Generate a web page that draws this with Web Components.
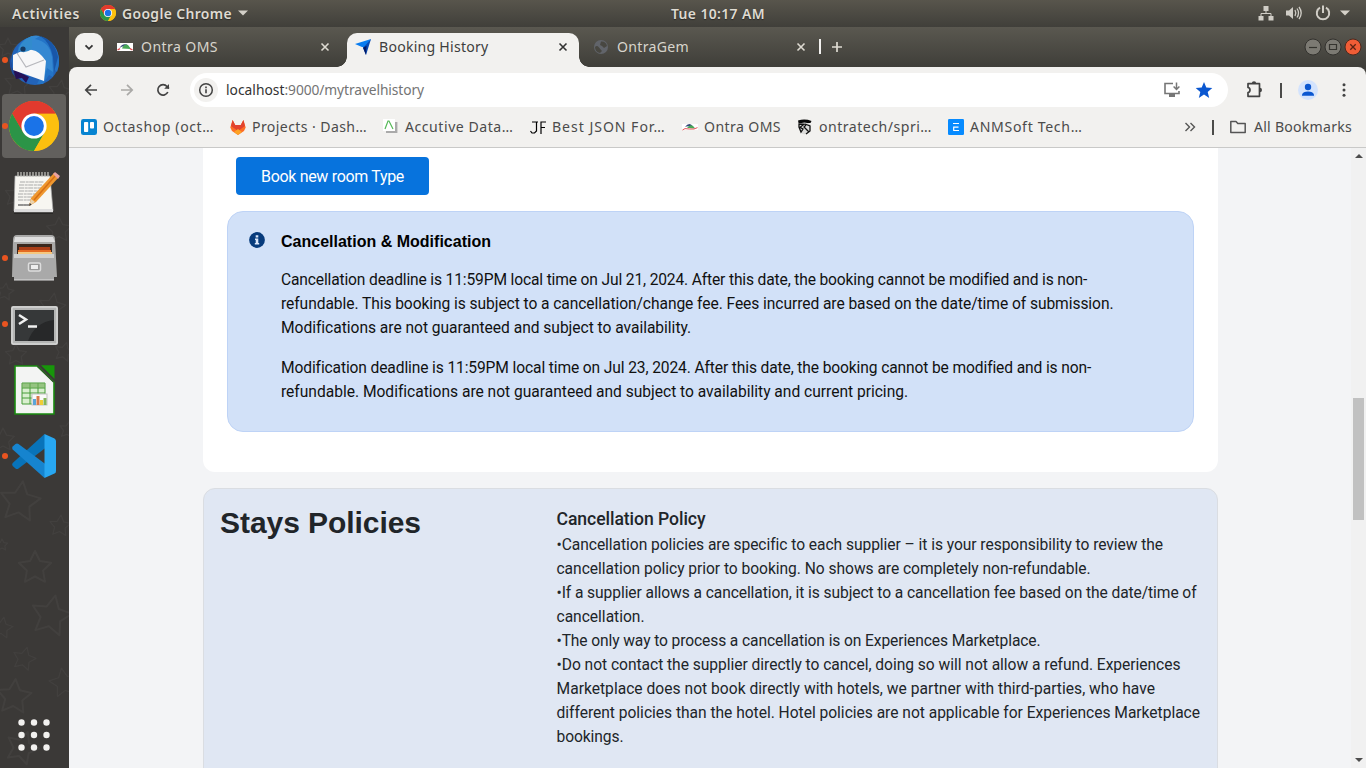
<!DOCTYPE html>
<html lang="en">
<head>
<meta charset="utf-8">
<title>Booking History</title>
<style>
html,body{margin:0;height:100%;overflow:hidden}
body{font-family:"Noto Sans","Open Sans",sans-serif;background:#3b3937}
</style>
</head>
<body>
<desk-top></desk-top>
<script>
const ICONS = {
chrome:['0 0 50 50',`<circle cx="25" cy="25" r="25" fill="#fbbc05"/><path d="M3.3 12.5A25 25 0 0 1 46.7 12.5H25L14.2 31.2Z" fill="#e23a2e"/><path d="M3.3 12.5A25 25 0 0 0 25 50L35.8 31.2 14.2 31.2Z" fill="#2b9447"/><path d="M46.7 12.5A25 25 0 0 1 25 50L35.8 31.2 37.5 25 25 12.5Z" fill="#fcc00f"/><path d="M3.3 12.5 14.2 31.2 25 25 25 12.5 46.7 12.5A25 25 0 0 0 3.3 12.5" fill="#e23a2e"/><circle cx="25" cy="25" r="12.6" fill="#fff"/><circle cx="25" cy="25" r="9.9" fill="#1a73e8"/>`],
caret:['0 0 10 6','<path d="M0 .5H10L5 5.5Z" fill="#d4d0c8"/>'],
network:['0 0 16 16','<path d="M5.5 1h5v5h-5zM.5 11h5v4.500h-5zM10.500 11h5v4.500h-5z" fill="#d0cdc6"/><path d="M8 6v3M3 11V8.500h10V11" fill="none" stroke="#d0cdc6"/>'],
volume:['0 0 16 16','<path d="M0 5.500h3L7 2v12L3 10.500H0z" fill="#d0cdc6"/><path d="M9 5q1.600 3 0 6M11 3.500q3 4.500 0 9M13 2q4.400 6 0 12" fill="none" stroke="#d0cdc6" stroke-width="1.300"/>'],
power:['0 0 16 16','<path d="M5 2.700a6.200 6.200 0 1 0 6 0" fill="none" stroke="#d0cdc6" stroke-width="2"/><path d="M8 .5V8" stroke="#d0cdc6" stroke-width="2"/>'],
thunderbird:['0 0 52 52',`<circle cx="27" cy="27" r="24" fill="#2263b8"/><path d="M10 14C15 1 31-1 40 6 50 12 54 26 49 38L46 35 45 43 41 41 35 50 29 50 34 40Z" fill="#2474c7"/><path d="M13 14C17 3 25 0 32 2L27 5Q42 8 44 23L45 38 39 34 37 41 31 33 35 26 30 20Z" fill="#3488d2"/><path d="M32 2Q47 6 50 23L46 38 45 23Q42 8 32 2" fill="#1856a8"/><path d="M5 35 8 45 14 44 18 49 21 43Z" fill="#251158"/><path d="M5 21 16 16Q27 14 34 22L38 27 36 47 5 36Z" fill="#f7f7f8"/><path d="M9 19 18 33 36 26" fill="none" stroke="#b7b8bd" stroke-width="1.200"/><path d="M9 20Q12 6 24 2L24 15Q17 20 11 17Z" fill="#328bcd"/><circle cx="15" cy="15" r="2.600" fill="#153963"/><path d="M2 20Q0 35 7 43L4 33Z" fill="#1d4ca2"/>`],
notes:['0 -2 52 52',`<path d="M7 8H42L45 43H6Z" fill="#f7f6f1" stroke="#aaa" stroke-width=".7"/><path d="M6 41H45V45H6Z" fill="#ddd"/><path d="M6 45H45" stroke="#242322" stroke-width="1.500"/><path d="M10 4V9M13 4V9M16 4V9M19 4V9M22 4V9M25 4V9M28 4V9M31 4V9M34 4V9M37 4V9M40 4V9" stroke="#c8c8c2" stroke-width="1.200"/><path d="M12 14H36M11 17H34M11 20H37M11 23H31M10 26H35M10 29H30M10 32H28M10 37H23" stroke="#aaa" stroke-width="1.100" stroke-dasharray="5 .7 3 .5"/><path d="M10 37H21" stroke="#555"/><path d="m46 5 5 4L28 34l-7 4 2-8Z" fill="#ef982f"/><path d="m48 7-22 25" stroke="#d66f15" stroke-width="1.500"/><path d="m45 6 2-2 5 4-2 3Z" fill="#e9a2a0"/><path d="m21 38 2-7 4 3Z" fill="#ead3ae"/><path d="m21 38 .7-3 2 1.500Z" fill="#333"/>`],
files:['1 0 52 52',`<path d="M6 8Q6 3 10 3H44Q48 3 48 7L50 45H5Z" fill="#a9a9a8"/><path d="M8 5H46L48 10H7Z" fill="#dedede"/><path d="M10 12H45V24H10Z" fill="#3b281e"/><path d="M12 15H43V18H12Z" fill="#aa3e18"/><path d="M11 18H44V21H11Z" fill="#e46a22"/><path d="M11 20H45V23H11Z" fill="#f5c77e"/><path d="M7 22H47V48H7Z" fill="#a9a9a9"/><path d="M7 22H47V26H7Z" fill="#d0d0cf"/><rect x="21.500" y="31" width="12" height="8" rx="1.500" fill="#999" stroke="#ddd" stroke-width="1.500"/><rect x="24" y="33" width="7" height="4" fill="#eee"/><path d="M7 48H47" stroke="#ddd"/>`],
terminal:['0 -1 52 52',`<rect x="3" y="7" width="47" height="39" rx="2" fill="#b4b5b4"/><rect x="4" y="8" width="45" height="37" rx="1" fill="none" stroke="#e6e6e5"/><rect x="7" y="11" width="39" height="31" fill="#272829"/><path d="M7 11H46V21Q27 23 20 42H7Z" fill="#363839"/><path d="m11 16 7 4.500L11 25" fill="none" stroke="#f1f1f1" stroke-width="2.500"/><path d="M20 27.500H29" stroke="#f1f1f1" stroke-width="2.500"/>`],
calc:['0 0 52 52',`<path d="M7 2H29L46 18V50H7Z" fill="#f3f4f3" stroke="#19890f" stroke-width="1.600"/><path d="M33 1.200H46.500V15Z" fill="#17960a"/><path d="M30 2 46 18" stroke="#315b2a" stroke-width="2"/><path d="M14 19H37V40H14Z" fill="#d9efcf" stroke="#469c39"/><path d="M14 24H37M14 29H37M14 34H37M22 19V40M30 19V40" stroke="#469c39"/><path d="M14 19H37V24H14Z" fill="#70ac58" fill-opacity=".65"/><rect x="24" y="30" width="15" height="11" fill="#fafafa" stroke="#c2c2c2"/><path d="M25 35h3v6h-3z" fill="#5aa5da"/><path d="M28.500 32h3v9h-3z" fill="#d97848"/><path d="M32 36h3v5h-3z" fill="#f0cd35"/><path d="M35.500 34h3v7h-3z" fill="#82b659"/>`],
code:['0 0 52 52',`<path d="M36.500 4 4.700 33Q3.500 34.500 4.700 36L7.500 38.500Q9 39.500 10.500 38.500L40 16Z" fill="#0873b9"/><path d="M7.500 14 4.700 16.500Q3.500 18 4.700 19.500L36.500 48 40 36 10.500 14Q9 13 7.500 14" fill="#1684cf"/><path d="m36.500 4 10 4.500q1.500 1 1.500 2.500V41q0 2-1.500 2.500L36.500 48Z" fill="#28a7f1"/>`],
grid:['0 0 52 52','<g fill="#f2f1ef"><circle cx="13.500" cy="13.500" r="3.200"/><circle cx="26" cy="13.500" r="3.200"/><circle cx="38.500" cy="13.500" r="3.200"/><circle cx="13.500" cy="26" r="3.200"/><circle cx="26" cy="26" r="3.200"/><circle cx="38.500" cy="26" r="3.200"/><circle cx="13.500" cy="38.500" r="3.200"/><circle cx="26" cy="38.500" r="3.200"/><circle cx="38.500" cy="38.500" r="3.200"/></g>'],
chevron:['0 0 16 16','<path d="m4.500 6.300 3.500 3.500 3.500-3.500" fill="none" stroke="#333" stroke-width="1.800"/>'],
ontra:['0 0 16 16','<path d="M0 4H16V12H0Z" fill="#fff"/><path d="M2.500 9Q5 4 10 5.500L13 10Q7 5 2.500 9" fill="#344779"/><path d="M5 9.500Q7 4 11 6L14 10Z" fill="#48a756"/><path d="M.5 11 3 9.700M13 9.700 15.500 11" fill="none" stroke="#e34c50" stroke-width="1.400"/>'],
ontra2:['0 0 16 16','<path d="M0 5H16V11H0Z" fill="#fff"/><path d="M3 8Q6 4 9 5.500L13 9.500Q7 6 3 8" fill="#344779"/><path d="M5 9Q8 5 11 7L13 9.500Z" fill="#48a756"/><path d="M.5 11 3 9.600Q8 10.300 12 10L15.500 8.600" fill="none" stroke="#e65558" stroke-width="1"/>'],
close:['0 0 16 16','<path d="m4.500 4.500 7 7m0-7-7 7" fill="none" stroke="currentColor" stroke-width="1.600"/>'],
plane:['0 0 16 16','<path d="M0 5 16 0 11 8.500 7 8Z" fill="#087cf0"/><path d="m16 0-5 16-3-7Z" fill="#074ab4"/><path d="m11.500 7-3.500 1.400L11 16Z" fill="#001a68"/>'],
globe:['0 0 16 16','<circle cx="8" cy="8" r="7" fill="#61646a"/><path d="M2 8Q4 6 6 8.500T9 12L7 14Q2 13 2 8M8 2.500Q13 2 14 7L11 9 9 7 7 6Z" fill="#484741"/>'],
plus:['0 0 16 16','<path d="M8 3V13M3 8H13" stroke="#dedbd2" stroke-width="1.700"/>'],
back:['0 0 16 16','<path d="M14 8H3M8 2.800 2.800 8 8 13.200" fill="none" stroke="#434343" stroke-width="1.700"/>'],
fwd:['0 0 16 16','<path d="M2 8H13M8 2.800 13.200 8 8 13.200" fill="none" stroke="#aaa9a7" stroke-width="1.700"/>'],
reload:['0 0 16 16','<path d="M12.800 10A5.200 5.200 0 1 1 12 4.500L14 6.500" fill="none" stroke="#434343" stroke-width="1.700"/><path d="M14 2V6.800H9.200Z" fill="#434343"/>'],
info:['0 0 16 16','<circle cx="8" cy="8" r="6.300" fill="none" stroke="#434343" stroke-width="1.500"/><path d="M8 7.200V11.300M8 4.600V6.200" stroke="#434343" stroke-width="1.600"/>'],
install:['0 0 20 20','<path d="M11 3.500H3V13.500H17V11" fill="none" stroke="#767676" stroke-width="1.600"/><path d="M7 14H13V17H7Z" fill="#767676"/><path d="M14.500 2.500V9M11.600 6.500l2.900 3 2.900-3" fill="none" stroke="#767676" stroke-width="1.500"/>'],
star:['0 0 20 20','<path d="m10 2 2.300 5.600 6 .4-4.600 3.900L15.200 18 10 14.600 4.800 18l1.500-6.100L1.700 8l6-.4Z" fill="#0b57d0"/>'],
puzzle:['0 0 20 20','<path d="M4 3.700H15.500V16.300H4V12.600Q6 12.200 6 10T4 7.400Z" fill="none" stroke="#434343" stroke-width="1.700" stroke-linejoin="round"/><path d="M7.800 3.500a2.200 2.200 0 0 1 4.400 0ZM15.800 7.800a2.200 2.200 0 0 1 0 4.400Z" fill="#434343"/>'],
avatar:['0 0 20 20','<circle cx="10" cy="10" r="10" fill="#d3e3fd"/><circle cx="10" cy="7" r="3.200" fill="#0b57d0"/><path d="M4 15.800V14.500Q5 11.500 10 11.500T16 14.500V15.800Z" fill="#0b57d0"/>'],
dots:['0 0 16 16','<g fill="#434343"><circle cx="8" cy="2.700" r="1.500"/><circle cx="8" cy="8" r="1.500"/><circle cx="8" cy="13.300" r="1.500"/></g>'],
trello:['0 0 16 16','<rect width="16" height="16" rx="2.300" fill="#0784d1"/><rect x="3" y="3" width="4.200" height="10" rx=".8" fill="#fff"/><rect x="9" y="3" width="4" height="6.500" rx=".8" fill="#fff"/>'],
gitlab:['0 0 16 16','<path d="m.3 8.500 2.300-7.500 2.600 5h5.600l2.600-5L15.700 8.500 14 12 8 16 2 12Z" fill="#fc6d26"/><path d="m2.600 1 2.600 5h5.600l2.600-5 1.600 6L8 12 1 7Z" fill="#e2432e"/><path d="m8 16-4-3 4-3 4 3Z" fill="#fca326"/>'],
accutive:['0 0 16 16','<path d="M3 12.800H13.200V3" fill="none" stroke="#aaa" stroke-width="2.400"/><path d="M0 0H12V12H0Z" fill="#fff"/><path d="M2 10 5 2h1l4 8" fill="none" stroke="#55b957" stroke-width="1.200"/>'],
jf:['0 0 16 16','<path d="M2 3H8M6.500 3V12L4.500 14H2L.5 12M11 15V3H16M11 8.500H15" fill="none" stroke="#000" stroke-width="1.200"/>'],
spring:['0 0 16 16','<path d="M1 1.500Q8-.5 14.500 2L13.500 4H1.500Z" fill="#080808"/><path d="M2 5Q7 2 13.500 5L13 13Q8 17 4 14Z" fill="#dcdcda"/><path d="m2 5 5 .3-4 3 3 1.700-2 3-2-5ZM8 5l5 2v5l-4 3M9 6l-2 2 5 5" fill="none" stroke="#111" stroke-width="1.300"/>'],
anm:['0 0 16 16','<rect width="16" height="16" rx="1.200" fill="#078bff"/><path d="M5 4.500H11M5.200 8.200H10.500M5.200 11.500H11M5.700 7.500V11.500" stroke="#fff" stroke-width="1.200"/>'],
more:['0 0 16 16','<path d="m3.500 4 4 4-4 4M8.500 4l4 4-4 4" fill="none" stroke="#555" stroke-width="1.400"/>'],
folder:['0 0 16 16','<path d="M.8 2.500H6l1.800 2H15.200V13.500H.8Z" fill="none" stroke="#555" stroke-width="1.500" stroke-linejoin="round"/>'],
infofill:['0 0 16 16','<circle cx="8" cy="8" r="7.900" fill="#073b7c"/><path d="M6.700 3.200H9.300V5.400H6.700ZM6 6.500H9.300V10.900H10.200V12.400H5.800V10.900H6.700V8H6Z" fill="#dbe7fa"/>'],
up:['0 0 8 6','<path d="M0 5 4 1 8 5Z" fill="#4d4d4d"/>'],
down:['0 0 8 6','<path d="M0 1H8L4 5Z" fill="#4d4d4d"/>'],
min:['0 0 20 20','<circle cx="10" cy="10" r="8" fill="#7c7a73" stroke="#33322e"/><path d="M6 10.500H14" stroke="#35342f" stroke-width="1.200"/>'],
max:['0 0 20 20','<circle cx="10" cy="10" r="8" fill="#7c7a73" stroke="#33322e"/><path d="M6.500 7.500H13.500V12.500H6.500Z" fill="none" stroke="#35342f" stroke-width="1.200"/>'],
shut:['0 0 20 20','<circle cx="10" cy="10" r="8" fill="#f05d36" stroke="#4b2a1f"/><path d="m7.300 7.300 5.400 5.400m0-5.400-5.400 5.400" stroke="#5a2313" stroke-width="1.300"/>']
};

function component(name, html, setup) {
  customElements.define(name, class extends HTMLElement {
    connectedCallback() {
      if (this.shadowRoot) return;
      const root = this.attachShadow({mode: 'open'});
      root.innerHTML = html;
      if (setup) setup(this, root);
    }
  });
}

component('ui-icon', `<style>:host{display:block;flex:none;width:16px;height:16px}svg{display:block;width:100%;height:100%;overflow:visible}</style><svg></svg>`, (el, root) => {
  const [box, body] = ICONS[el.getAttribute('name')];
  const svg = root.querySelector('svg');
  svg.setAttribute('viewBox', box);
  svg.innerHTML = body;
  const [w, h] = (el.getAttribute('size') || '').split(' ');
  if (w) { el.style.width = w + 'px'; el.style.height = (h || w) + 'px'; }
});

/* A single line of text, tracked so that it fills the given width. */
const lines = new Set();
component('text-line', `<style>:host{display:block;flex:none;white-space:nowrap}span{display:inline-block;white-space:pre}</style><span><slot></slot></span>`, (el, root) => {
  const w = +el.getAttribute('w');
  el.style.width = w + 'px';
  lines.add(() => {
    const span = root.querySelector('span');
    const n = el.textContent.length;
    span.style.letterSpacing = ((w - span.getBoundingClientRect().width) / n).toFixed(4) + 'px';
  });
});

component('top-bar', `<style>
:host{display:flex;align-items:center;height:27px;box-sizing:border-box;padding-bottom:1px;background:linear-gradient(#58554c,#403f3a);color:#dfdbd2;font:600 13.9px/25px "Noto Sans",sans-serif;text-shadow:0 1px 1px #0006}
.left{display:flex;align-items:center;width:659px;padding-left:12px}.left ui-icon:nth-of-type(1){margin:0 6px 0 20px}.left ui-icon:nth-of-type(2){margin-left:6px}
.right{display:flex;align-items:center;margin-left:auto;padding-right:16px}
</style><div class="left"><text-line w="68">Activities</text-line><ui-icon name="chrome"></ui-icon><text-line w="110">Google Chrome</text-line><ui-icon name="caret" size="10 6"></ui-icon></div><text-line w="94">Tue 10:17 AM</text-line>
<div class="right"><ui-icon name="network"></ui-icon><ui-icon name="volume" style="margin-left:12px"></ui-icon><ui-icon name="power" style="margin-left:13px"></ui-icon><ui-icon name="caret" size="10 6" style="margin-left:9px"></ui-icon></div>`);

component('dock-item', `<style>
:host{position:relative;display:flex;justify-content:center;align-items:center;width:64px;height:64px;margin-left:2px;border-radius:4px}
:host([active]){background:#62605d}
:host([running])::before{content:"";position:absolute;left:0;top:29px;width:6px;height:6px;border-radius:50%;background:#e95420}
</style><slot></slot>`);

component('side-dock', `<style>
:host{position:relative;display:flex;flex-direction:column;gap:2px;width:69px;flex:none;background:#3b3937;box-sizing:border-box;padding-top:1px}
.stars{position:absolute;inset:0;width:69px;height:741px}
.apps{margin-top:auto;margin-bottom:1px}
</style><svg class="stars" viewBox="0 27 69 741"></svg>
<dock-item running><ui-icon name="thunderbird" size="52"></ui-icon></dock-item>
<dock-item running active><ui-icon name="chrome" size="50"></ui-icon></dock-item>
<dock-item><ui-icon name="notes" size="52"></ui-icon></dock-item>
<dock-item running><ui-icon name="files" size="52"></ui-icon></dock-item>
<dock-item running><ui-icon name="terminal" size="52"></ui-icon></dock-item>
<dock-item><ui-icon name="calc" size="52"></ui-icon></dock-item>
<dock-item running><ui-icon name="code" size="52"></ui-icon></dock-item>
<dock-item class="apps"><ui-icon name="grid" size="52"></ui-icon></dock-item>`, (el, root) => {
  const stars = [[20,502,21,8],[60,526,11,5],[35,568,17,0],[51,616,21,12],[24,659,12,15],[14,697,18,5],[64,683,15,-10],[22,748,17,20],[2,628,11,10],[2,545,6,0],[68,430,9,10],[3,440,12,0],[52,307,14,10],[16,355,11,0],[5,292,9,8],[64,352,10,15],[16,196,12,10],[59,230,13,0],[18,84,14,5],[60,92,12,8],[8,48,10,0]];
  root.querySelector('.stars').innerHTML = stars.map(([x, y, r, a]) => {
    let p = '';
    for (let i = 0; i < 10; i++) {
      const t = (a + i * 36 - 90) * Math.PI / 180, q = i % 2 ? r * .5 : r;
      p += `${(x + q * Math.cos(t)).toFixed(1)},${(y + q * Math.sin(t)).toFixed(1)} `;
    }
    return `<polygon points="${p}" fill="none" stroke="#fff" stroke-opacity=".04" stroke-width="${r > 15 ? 2 : 1.2}" stroke-linejoin="round"/>`;
  }).join('');
});

component('browser-tab', `<style>
:host{position:relative;display:flex;align-items:center;box-sizing:border-box;height:34px;padding:0 0 6px 8px;color:#d8d5cc;font-size:14.1px;line-height:28px}
:host([active]){background:#f2f1ef;color:#3d3d3d;border-radius:10px 10px 0 0}
:host([active])::before,:host([active])::after{content:"";position:absolute;bottom:0;width:10px;height:10px}
:host([active])::before{left:-10px;background:radial-gradient(circle at 0 0,#0000 9.5px,#f2f1ef 10px)}
:host([active])::after{right:-10px;background:radial-gradient(circle at 100% 0,#0000 9.5px,#f2f1ef 10px)}
.x{margin-left:auto;color:#dedbd2}:host([active]) .x{color:#333}
::slotted(text-line){margin-left:8px}
</style><slot></slot><ui-icon class="x" name="close"></ui-icon>`);

component('tab-strip', `<style>
:host{display:flex;height:40px;box-sizing:border-box;padding:6px 3px 0 6px;background:linear-gradient(#5a5850,#3f3e39)}
.menu{display:flex;align-items:center;justify-content:center;width:28px;height:28px;border-radius:9px;background:#f2f1ef}
.bar{width:2px;height:15px;margin-top:6px;background:#f2f1ef}.plus{margin:6px 0 0 8px}
.win{display:flex;margin:4px 0 0 auto}
</style><div class="menu"><ui-icon name="chevron"></ui-icon></div>
<browser-tab style="width:238px;margin-left:6px;padding-right:14px"><ui-icon name="ontra"></ui-icon><text-line w="77">Ontra OMS</text-line></browser-tab>
<browser-tab active style="width:232px;padding-right:8px"><ui-icon name="plane"></ui-icon><text-line w="109.500">Booking History</text-line></browser-tab>
<browser-tab style="width:234px;margin-left:6px;padding-right:10px"><ui-icon name="globe"></ui-icon><text-line w="72">OntraGem</text-line></browser-tab>
<div class="bar"></div><ui-icon class="plus" name="plus"></ui-icon>
<div class="win"><ui-icon name="min" size="20"></ui-icon><ui-icon name="max" size="20"></ui-icon><ui-icon name="shut" size="20"></ui-icon></div>`);

component('nav-bar', `<style>
:host{display:grid;grid-template-columns:44px 28px 44px 5px 1038px 52px 2px 52px 20px;height:46px;align-items:center;justify-items:center;background:#f2f1ef;border-radius:8px 8px 0 0}
.pill{grid-column:5;display:flex;align-items:center;box-sizing:border-box;width:1038px;height:34px;padding:0 14px 0 4px;border-radius:17px;background:#fff;font-size:13.8px;line-height:34px;color:#747474}
.chip{display:flex;align-items:center;justify-content:center;width:24px;height:24px;margin-right:8px;border-radius:50%;background:#f2f1ef}
.host{color:#333}.bar{width:2px;height:15px;background:#4b4b49}
</style><ui-icon name="back"></ui-icon><ui-icon name="fwd"></ui-icon><ui-icon name="reload"></ui-icon>
<div class="pill"><div class="chip"><ui-icon name="info"></ui-icon></div><text-line class="host" w="58.500">localhost</text-line><text-line w="139.500">:9000/mytravelhistory</text-line><ui-icon name="install" size="20" style="margin:0 12px 0 auto"></ui-icon><ui-icon name="star" size="20"></ui-icon></div>
<ui-icon name="puzzle" size="20"></ui-icon><div class="bar"></div><ui-icon name="avatar" size="20"></ui-icon><ui-icon name="dots"></ui-icon>`);

component('book-mark', `<style>:host{display:flex;align-items:center;gap:6px;flex:none}</style><slot></slot>`);

component('bookmark-bar', `<style>
:host{display:flex;align-items:center;height:34px;padding:0 14px 6px 12px;box-sizing:border-box;background:#f2f1ef;color:#4b4b4b;font-size:14.1px;line-height:28px}
.bar{width:2px;height:15px;margin:0 16px 0 14px;background:#4b4b49}.more{margin-left:auto}
</style>
<book-mark style="width:149px"><ui-icon name="trello"></ui-icon><text-line w="111">Octashop (oct…</text-line></book-mark>
<book-mark style="width:153px"><ui-icon name="gitlab"></ui-icon><text-line w="115">Projects · Dash…</text-line></book-mark>
<book-mark style="width:147px"><ui-icon name="accutive"></ui-icon><text-line w="108.500">Accutive Data…</text-line></book-mark>
<book-mark style="width:152px"><ui-icon name="jf"></ui-icon><text-line w="113.500">Best JSON For…</text-line></book-mark>
<book-mark style="width:115px"><ui-icon name="ontra2"></ui-icon><text-line w="77">Ontra OMS</text-line></book-mark>
<book-mark style="width:151px"><ui-icon name="spring"></ui-icon><text-line w="113">ontratech/spri…</text-line></book-mark>
<book-mark><ui-icon name="anm"></ui-icon><text-line w="112.500">ANMSoft Tech…</text-line></book-mark>
<ui-icon class="more" name="more"></ui-icon><div class="bar"></div><book-mark style="gap:8px"><ui-icon name="folder"></ui-icon><text-line w="98">All Bookmarks</text-line></book-mark>`);

component('primary-button', `<style>:host{display:block}button{display:flex;align-items:center;width:193px;height:38px;margin:0;padding:2px 0 0 25px;border:0;border-radius:4px;background:#0773dd;color:#fff;font:400 16px/36px Roboto,sans-serif}</style><button><slot></slot></button>`);

component('info-alert', `<style>
:host{display:flex;box-sizing:border-box;width:967px;height:221px;padding:18px 20px;border:1px solid #bed3f6;border-radius:16px;background:#d2e1f8;color:#111}
ui-icon{margin:2px 16.500px 0 .5px}h4{margin:0 0 14px;font:bold 16px/24px "Liberation Sans",sans-serif;color:#000}
</style><ui-icon name="infofill"></ui-icon><div><h4><text-line w="210">Cancellation &amp; Modification</text-line></h4><slot></slot></div>`);

component('text-block', `<style>:host{display:block;margin-bottom:16px;font:400 15.6px/24px Roboto,sans-serif}</style><slot></slot>`);

component('stay-policies', `<style>
:host{display:grid;grid-template-columns:336.500px 1fr;box-sizing:border-box;width:1015px;height:400px;flex:none;padding:16px 16px;border:1px solid #dadde2;border-radius:12px;background:#e0e7f3;color:#212529}
h2{margin:0;font:bold 30px/36px "Liberation Sans",sans-serif}h5{margin:2px 0;font:500 17.6px/24px Roboto,sans-serif}
</style><h2><text-line w="201">Stays Policies</text-line></h2><div><h5><text-line w="149">Cancellation Policy</text-line></h5><slot></slot></div>`);

component('scroll-bar', `<style>
:host{display:flex;flex-direction:column;align-items:center;width:15px;flex:none;background:#f1f1f1}
.thumb{width:11px;height:122px;margin-top:239px;background:#c1c1c1}
</style><ui-icon name="up" size="8 6" style="margin-top:5px"></ui-icon><div class="thumb"></div><ui-icon name="down" size="8 6" style="margin:auto 0 5px"></ui-icon>`);

component('travel-page', `<style>
:host{display:flex;flex:1;min-height:0;background:#f3f4f6}
main{display:flex;flex-direction:column;gap:16px;flex:1;padding-left:134px;min-width:0;overflow:hidden}
.card{box-sizing:border-box;width:1015px;height:324px;flex:none;padding:9px 24px 0;border-radius:0 0 12px 12px;background:#fff}
primary-button{margin:0 0 16px 9px}
</style><main><section class="card"><primary-button><text-line w="143">Book new room Type</text-line></primary-button>
<info-alert>
<text-block><text-line w="805.500">Cancellation deadline is 11:59PM local time on Jul 21, 2024. After this date, the booking cannot be modified and is non-</text-line><text-line w="832.500">refundable. This booking is subject to a cancellation/change fee. Fees incurred are based on the date/time of submission.</text-line><text-line w="409.500">Modifications are not guaranteed and subject to availability.</text-line></text-block>
<text-block><text-line w="809">Modification deadline is 11:59PM local time on Jul 23, 2024. After this date, the booking cannot be modified and is non-</text-line><text-line w="626.500">refundable. Modifications are not guaranteed and subject to availability and current pricing.</text-line></text-block>
</info-alert></section>
<stay-policies><text-block><text-line w="606">•Cancellation policies are specific to each supplier – it is your responsibility to review the</text-line><text-line w="534">cancellation policy prior to booking. No shows are completely non-refundable.</text-line><text-line w="640">•If a supplier allows a cancellation, it is subject to a cancellation fee based on the date/time of</text-line><text-line w="88">cancellation.</text-line><text-line w="484">•The only way to process a cancellation is on Experiences Marketplace.</text-line><text-line w="624">•Do not contact the supplier directly to cancel, doing so will not allow a refund. Experiences</text-line><text-line w="598.500">Marketplace does not book directly with hotels, we partner with third-parties, who have</text-line><text-line w="643.500">different policies than the hotel. Hotel policies are not applicable for Experiences Marketplace</text-line><text-line w="67">bookings.</text-line></text-block></stay-policies></main><scroll-bar></scroll-bar>`);

component('browser-window', `<style>
:host{display:flex;flex-direction:column;flex:1;min-width:0;background:#3f3e39}.edge{height:1px;flex:none;background:#c9c9c8}
tab-strip,nav-bar,bookmark-bar{flex:none}
</style><tab-strip></tab-strip><nav-bar></nav-bar><bookmark-bar></bookmark-bar><div class="edge"></div><travel-page></travel-page>`);

component('desk-top', `<style>:host{display:flex;flex-direction:column;width:1366px;height:768px;overflow:hidden}.row{display:flex;flex:1;min-height:0}</style><top-bar></top-bar><div class="row"><side-dock></side-dock><browser-window></browser-window></div>`);

lines.forEach(fit => fit());
</script>
</body>
</html>
